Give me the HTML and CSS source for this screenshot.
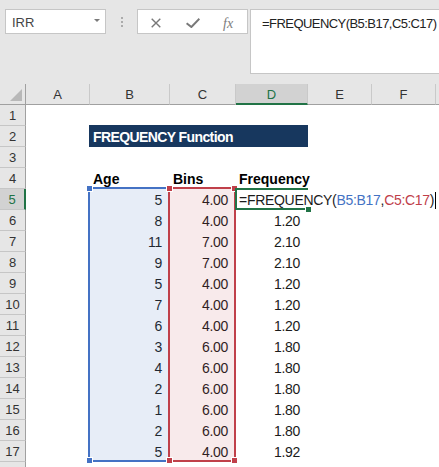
FILE: index.html
```html
<!DOCTYPE html>
<html lang="en">
<head>
    <meta charset="UTF-8">
    <meta name="viewport" content="width=device-width, initial-scale=1.0">
    <title>FREQUENCY Function</title>
    <link rel="stylesheet" href="styles.css">
</head>
<body>
    <div class="toolbar">
        <div class="name-box">
            <span>IRR</span>
            <span class="drop"></span>
        </div>
        <div class="grip"><i></i><i></i><i></i></div>
        <div class="fx-buttons">
            <svg class="cancel" width="10" height="10" viewBox="0 0 10 10">
                <path d="M0.7 0.7L9.3 9.3M9.3 0.7L0.7 9.3" stroke="#787878" stroke-width="1.4" fill="none"/>
            </svg>
            <svg class="enter" width="14" height="10" viewBox="0 0 14 10">
                <path d="M0.6 5.2L5.4 9L13.4 0.8" stroke="#787878" stroke-width="2" fill="none"/>
            </svg>
            <span class="fx">fx</span>
        </div>
        <div class="formula-bar">=FREQUENCY(B5:B17,C5:C17)</div>
    </div>

    <div class="sheet">
        <div class="grid" id="grid"></div>
        <div class="ranges">
            <div class="ref ref-blue"><i class="h tl"></i><i class="h bl"></i></div>
            <div class="ref ref-red"><i class="h tl"></i><i class="h tr"></i><i class="h bl"></i><i class="h br"></i></div>
            <div class="active-cell"><i class="h br"></i></div>
        </div>
    </div>

    <script>
        const grid = document.getElementById('grid');
        const letters = ['A', 'B', 'C', 'D', 'E', 'F', ''];
        const ages = [5, 8, 11, 9, 5, 7, 6, 3, 4, 2, 1, 2, 5];
        const bins = ['4.00', '4.00', '7.00', '7.00', '4.00', '4.00', '4.00', '6.00', '6.00', '6.00', '6.00', '6.00', '4.00'];
        const freq = ['', '1.20', '2.10', '2.10', '1.20', '1.20', '1.20', '1.80', '1.80', '1.80', '1.80', '1.80', '1.92'];

        function cell(cls, text) {
            const el = document.createElement('div');
            el.className = cls;
            if (text !== undefined) el.textContent = text;
            grid.appendChild(el);
            return el;
        }

        cell('corner');
        letters.forEach(l => cell(l === 'D' ? 'col-head active' : 'col-head', l));

        // row 18 only peeks in at the bottom edge, so no number on it
        for (let r = 1; r <= 18; r++) {
            cell(r === 5 ? 'row-head active' : 'row-head', r < 18 ? r : '');

            if (r === 2) {
                cell('c');
                cell('c title', 'FREQUENCY Function');
                cell('c');
                cell('c');
                cell('c');
                continue;
            }

            let row = ['', '', '', '', '', '', ''];
            let cls = 'c num';
            if (r === 4) {
                row = ['', 'Age', 'Bins', 'Frequency', '', '', ''];
                cls = 'c head';
            }
            if (r >= 5 && r <= 17) {
                row = ['', ages[r - 5], bins[r - 5], freq[r - 5], '', '', ''];
            }

            row.forEach((value, j) => {
                if (r === 5 && j === 3) {
                    const edit = cell('c edit');
                    edit.innerHTML = '=FREQUENCY(<span class="arg-b">B5:B17</span>,<span class="arg-c">C5:C17</span>)<span class="caret"></span>';
                } else {
                    cell(cls, value);
                }
            });
        }
    </script>
</body>
</html>
```

FILE: styles.css
```css
body {
    margin: 0;
    background: #e6e6e6;
    font-family: 'Liberation Sans', Arial, sans-serif;
    color: #1e1e1e;
    overflow: hidden;
}

/* formula bar area */

.toolbar {
    display: flex;
    align-items: flex-start;
    height: 84px;
    padding: 9px 0 0 5px;
    box-sizing: border-box;
}

.toolbar > * {
    flex-shrink: 0;
}

.name-box {
    display: flex;
    justify-content: space-between;
    align-items: flex-start;
    width: 101px;
    height: 25px;
    box-sizing: border-box;
    padding: 5px 5px 0 6px;
    background: white;
    border: 1px solid #c6c6c6;
    font-size: 13px;
    line-height: 16px;
    color: #444;
}

.drop {
    margin-top: 4px;
    border-left: 3.5px solid transparent;
    border-right: 3.5px solid transparent;
    border-top: 3px solid #7a7a7a;
}

.grip {
    display: flex;
    flex-direction: column;
    gap: 2px;
    margin: 8px 0 0 15px;
}

.grip i {
    width: 2px;
    height: 2px;
    background: #ababab;
}

.fx-buttons {
    display: flex;
    align-items: flex-start;
    width: 111px;
    height: 25px;
    box-sizing: border-box;
    margin-left: 14px;
    padding-top: 7px;
    background: white;
    border: 1px solid #c6c6c6;
}

.cancel {
    margin: 1px 0 0 13px;
}

.enter {
    margin: 1px 0 0 25px;
}

.fx {
    margin: -1px 0 0 23px;
    font-family: 'Liberation Serif', serif;
    font-style: italic;
    font-size: 14px;
    line-height: 16px;
    color: #7c7c7c;
}

.toolbar .formula-bar {
    flex: 1 1 auto;
    min-width: 0;
    height: 65px;
    box-sizing: border-box;
    margin-left: 2px;
    padding: 5px 0 0 11px;
    background: white;
    border: 1px solid #c6c6c6;
    border-right: none;
    font-size: 13px;
    line-height: 17px;
    letter-spacing: -0.55px;
    white-space: nowrap;
    color: #222;
}

/* worksheet */

.sheet {
    position: relative;
}

.grid,
.ranges {
    display: grid;
    grid-template-columns: 26px 64px 80px 66px 72px 64px 64px 1fr;
    grid-auto-rows: 21px;
}

.grid {
    background: white;
}

.corner,
.col-head,
.row-head {
    box-sizing: border-box;
    background: #e6e6e6;
    font-size: 13px;
    color: #333;
    text-align: center;
}

.corner {
    display: flex;
    justify-content: flex-end;
    align-items: flex-end;
    padding: 0 3px 3px 0;
    border-right: 1px solid #a0a0a0;
    border-bottom: 1px solid #a0a0a0;
}

.corner::after {
    content: '';
    border-left: 12px solid transparent;
    border-bottom: 12px solid #b8b8b8;
}

.col-head {
    line-height: 21px;
    border-right: 1px solid #c9c9c9;
    border-bottom: 1px solid #a0a0a0;
}

.col-head.active {
    background: #d2d2d2;
    color: #217346;
    border-bottom: 2px solid #217346;
}

.row-head {
    padding-top: 1px;
    line-height: 20px;
    border-right: 1px solid #a0a0a0;
    border-bottom: 1px solid #c6c6c6;
}

.row-head.active {
    background: #d2d2d2;
    color: #217346;
    border-right: 2px solid #217346;
}

.c {
    padding: 1px 3px 0;
    font-size: 14px;
    line-height: 21px;
    letter-spacing: -0.3px;
    white-space: nowrap;
    color: #1b1b1b;
}

.num {
    text-align: right;
    padding-right: 8px;
}

.head {
    font-weight: bold;
    letter-spacing: 0;
    color: black;
}

.title {
    grid-column: span 3;
    margin: -1px 0 0 -1px;
    padding: 2px 4px 0;
    background: #17375e;
    color: white;
    font-weight: bold;
    letter-spacing: -0.6px;
}

.edit {
    position: relative;
    z-index: 1;
    padding-left: 3px;
}

.arg-b {
    color: #4472c4;
}

.arg-c {
    color: #c0404a;
}

.caret {
    display: inline-block;
    width: 1px;
    height: 17px;
    margin-left: 1px;
    vertical-align: -4px;
    background: black;
}

/* reference ranges drawn over the cells */

.ranges {
    position: absolute;
    top: 0;
    left: 0;
    right: 0;
    grid-template-rows: repeat(19, 21px);
    pointer-events: none;
}

.ref {
    position: relative;
    grid-column: 3;
    grid-row: 6 / 19;
    margin: -2px 0 0 -2px;
    border: 2px solid #4472c4;
}

.ref-blue {
    background: rgba(68, 114, 196, 0.13);
}

.ref-red {
    grid-column: 4;
    border-color: #c0404a;
    background: rgba(192, 64, 74, 0.11);
}

.active-cell {
    position: relative;
    z-index: 2;
    grid-column: 5;
    grid-row: 6;
    margin: -1px 0 0 -1px;
    border: 2px solid #217346;
    border-right: none;
}

.h {
    position: absolute;
    width: 5px;
    height: 5px;
    border: 1px solid white;
    background: #4472c4;
}

.ref-red .h {
    background: #c0404a;
}

.active-cell .h {
    background: #217346;
}

.tl { top: -4px; left: -4px; }
.tr { top: -4px; right: -4px; }
.bl { bottom: -4px; left: -4px; }
.br { bottom: -4px; right: -4px; }

.active-cell .br {
    bottom: -5px;
}
```
